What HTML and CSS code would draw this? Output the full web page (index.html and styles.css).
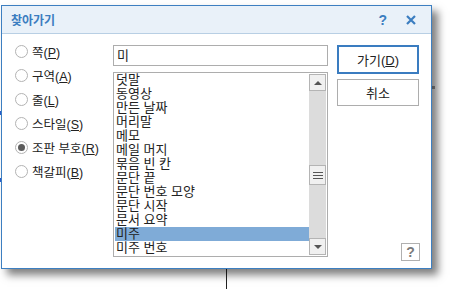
FILE: index.html
```html
<!DOCTYPE html>
<html lang="ko">
<head>
    <meta charset="utf-8">
    <title>찾아가기</title>
    <link rel="stylesheet" href="styles.css">
</head>
<body>
    <div class="desk">
        <!-- bits of the document behind the dialog -->
        <span class="mark mark-a"></span>
        <span class="mark mark-b"></span>
        <span class="mark mark-c"></span>
        <span class="mark mark-d"></span>

        <div class="dlg" role="dialog" aria-labelledby="dlgTitle">
            <div class="titlebar">
                <span class="title" id="dlgTitle">찾아가기</span>
                <span class="tb-help">?</span>
                <svg class="tb-close" width="10" height="10" viewBox="0 0 10 10">
                    <path d="M1 1 L9 9 M9 1 L1 9" stroke="#3b7dc0" stroke-width="2.2" fill="none"/>
                </svg>
            </div>
            <div class="content">
                <div class="radios">
                    <label class="radio"><span class="dot"></span><span>쪽(<u>P</u>)</span></label>
                    <label class="radio"><span class="dot"></span><span>구역(<u>A</u>)</span></label>
                    <label class="radio"><span class="dot"></span><span>줄(<u>L</u>)</span></label>
                    <label class="radio"><span class="dot"></span><span>스타일(<u>S</u>)</span></label>
                    <label class="radio"><span class="dot checked"></span><span>조판 부호(<u>R</u>)</span></label>
                    <label class="radio"><span class="dot"></span><span>책갈피(<u>B</u>)</span></label>
                </div>
                <div class="mid">
                    <div class="input">미</div>
                    <div class="list">
                        <ul class="items">
                            <li>덧말</li>
                            <li>동영상</li>
                            <li>만든 날짜</li>
                            <li>머리말</li>
                            <li>메모</li>
                            <li>메일 머지</li>
                            <li>묶음 빈 칸</li>
                            <li>문단 끝</li>
                            <li>문단 번호 모양</li>
                            <li>문단 시작</li>
                            <li>문서 요약</li>
                            <li class="sel">미주</li>
                            <li>미주 번호</li>
                        </ul>
                        <div class="scroll">
                            <div class="sb-btn"><span class="arrow up"></span></div>
                            <div class="thumb"><span></span><span></span><span></span></div>
                            <div class="sb-btn down"><span class="arrow dn"></span></div>
                        </div>
                    </div>
                </div>
                <div class="btns">
                    <button class="btn primary">가기(<u>D</u>)</button>
                    <button class="btn">취소</button>
                    <div class="help">?</div>
                </div>
            </div>
        </div>
    </div>
</body>
</html>
```

FILE: styles.css
```css
body {
    margin: 0;
    background: #fff;
    font-family: "Liberation Sans", "Noto Sans CJK KR", sans-serif;
    color: #222;
}

.desk {
    position: relative;
    width: 450px;
    height: 289px;
    padding: 5px 0 0 1px;
    box-sizing: border-box;
    overflow: hidden;
}

/* stray marks from the page underneath */
.mark {
    position: absolute;
    display: block;
}

.mark-a { left: 0; top: 111px; width: 2px; height: 4px; background: #2a5fd0; }
.mark-b { left: 0; top: 178px; width: 2px; height: 4px; background: #2a5fd0; }
.mark-c { left: 226px; top: 269px; width: 1px; height: 20px; background: #222; }
.mark-d { left: 431px; top: 86px; width: 4px; height: 3px; background: #999; }

.dlg {
    position: relative;
    z-index: 1;
    width: 431px;
    height: 264px;
    box-sizing: border-box;
    border: 1px solid #3d7fc1;
    background: #fff;
    box-shadow: 6px 6px 8px rgba(0, 0, 0, 0.5);
    display: flex;
    flex-direction: column;
}

.titlebar {
    height: 27px;
    flex: none;
    border-bottom: 1px solid #b8cfe4;
    background: #e9f1f9;
    display: flex;
    align-items: center;
    padding: 0 15px 0 9px;
}

.title {
    font-size: 12px;
    font-weight: bold;
    color: #3b7dc0;
    flex: 1;
}

.tb-help {
    font-size: 14px;
    font-weight: bold;
    color: #3b7dc0;
    margin-right: 19px;
}

.content {
    flex: 1;
    display: flex;
    padding: 5px 0 0 13px;
    min-height: 0;
}

.radios {
    width: 98px;
    flex: none;
}

.radio {
    height: 24px;
    display: flex;
    align-items: center;
    gap: 4px;
    font-size: 12.5px;
    white-space: nowrap;
}

.dot {
    width: 13px;
    height: 13px;
    box-sizing: border-box;
    border: 1px solid #b3b3b3;
    border-radius: 50%;
    background: #fff;
    display: flex;
    align-items: center;
    justify-content: center;
}

.dot.checked::after {
    content: "";
    width: 7px;
    height: 7px;
    border-radius: 50%;
    background: #5c5c5c;
}

.mid {
    width: 215px;
    flex: none;
    margin-top: 6px;
}

.input {
    height: 21px;
    box-sizing: border-box;
    border: 1px solid #adadad;
    padding-left: 3px;
    font-size: 13px;
    line-height: 19px;
}

.list {
    margin-top: 6px;
    height: 185px;
    box-sizing: border-box;
    border: 1px solid #adadad;
    display: flex;
    overflow: hidden;
}

.items {
    list-style: none;
    margin: 0;
    padding: 0 0 0 1px;
    flex: 1;
    font-size: 13px;
    line-height: 14px;
}

.items li {
    height: 14px;
    padding-left: 1px;
    white-space: nowrap;
}

.items li.sel {
    background: #7fabd7;
}

.scroll {
    width: 17px;
    flex: none;
    margin: 1px 1px 1px 0;
    background: #dcdcdc;
    display: flex;
    flex-direction: column;
}

.sb-btn {
    height: 17px;
    box-sizing: border-box;
    border: 1px solid #b4b4b4;
    background: #f0f0f0;
    display: flex;
    align-items: center;
    justify-content: center;
}

.sb-btn.down {
    margin-top: auto;
}

.arrow {
    width: 0;
    height: 0;
    border-left: 4px solid transparent;
    border-right: 4px solid transparent;
}

.arrow.up { border-bottom: 4px solid #555; }
.arrow.dn { border-top: 4px solid #555; }

.thumb {
    margin-top: 74px;
    height: 20px;
    box-sizing: border-box;
    border: 1px solid #b4b4b4;
    background: #f0f0f0;
    display: flex;
    flex-direction: column;
    align-items: center;
    justify-content: center;
    gap: 2px;
}

.thumb span {
    width: 10px;
    height: 1px;
    background: #555;
}

.btns {
    width: 82px;
    flex: none;
    margin-left: 9px;
    margin-top: 6px;
    display: flex;
    flex-direction: column;
}

.btn {
    background: #fff;
    font-family: inherit;
    font-size: 13px;
    color: #222;
    padding: 0;
    box-sizing: border-box;
    border: 1px solid #adadad;
    height: 27px;
    margin-top: 5px;
}

.btn.primary {
    height: 29px;
    margin-top: 0;
    border: 2px solid #3a7cc0;
}

.help {
    margin-top: auto;
    margin-bottom: 7px;
    margin-right: -1px;
    align-self: flex-end;
    width: 19px;
    height: 18px;
    box-sizing: border-box;
    border: 1px solid #b0b0b0;
    font-size: 14px;
    font-weight: bold;
    color: #7a7a7a;
    text-align: center;
    line-height: 16px;
}
```
